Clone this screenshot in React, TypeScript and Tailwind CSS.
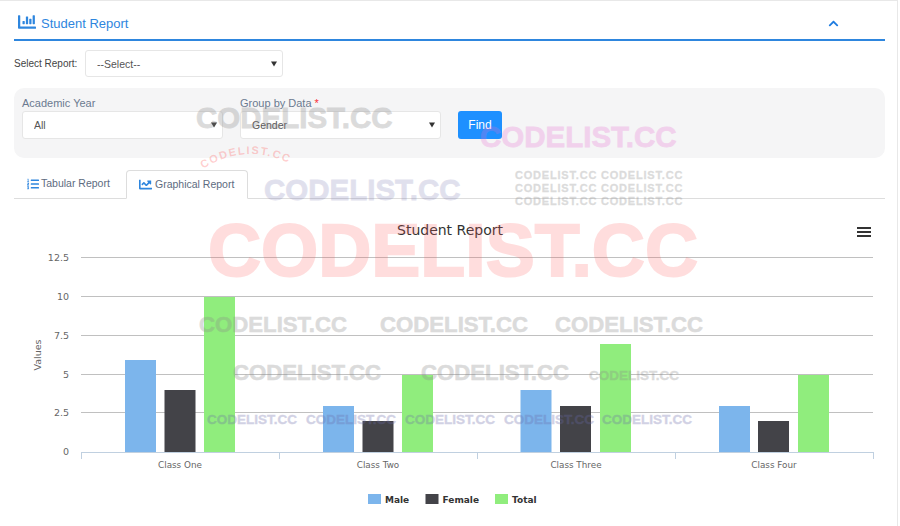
import React from 'react';
import { FaChartBar, FaChartLine, FaChevronUp, FaListOl } from 'react-icons/fa';

const gridLines = [
  { y: 258, label: '12.5' },
  { y: 297, label: '10' },
  { y: 336, label: '7.5' },
  { y: 375, label: '5' },
  { y: 413, label: '2.5' },
];

const bars = [
  { x: 125, top: 360, fill: '#7cb5ec' },
  { x: 164.5, top: 390, fill: '#434348' },
  { x: 204, top: 297, fill: '#90ed7d' },
  { x: 323, top: 406, fill: '#7cb5ec' },
  { x: 362.5, top: 421, fill: '#434348' },
  { x: 402, top: 375, fill: '#90ed7d' },
  { x: 520.5, top: 390, fill: '#7cb5ec' },
  { x: 560, top: 406, fill: '#434348' },
  { x: 600, top: 344, fill: '#90ed7d' },
  { x: 719, top: 406, fill: '#7cb5ec' },
  { x: 758, top: 421, fill: '#434348' },
  { x: 798, top: 375, fill: '#90ed7d' },
];

const classes = [
  { x: 180, label: 'Class One' },
  { x: 378, label: 'Class Two' },
  { x: 576, label: 'Class Three' },
  { x: 774, label: 'Class Four' },
];

const legend = [
  { x: 368, label: 'Male', fill: '#7cb5ec' },
  { x: 425.5, label: 'Female', fill: '#434348' },
  { x: 495, label: 'Total', fill: '#90ed7d' },
];

const Chart: React.FC = () => (
  <svg viewBox="0 199 898 326" className="block w-[898px] h-[326px] -ml-[14px]" fontFamily="'DejaVu Sans', sans-serif">
    <text x="450" y="235" textAnchor="middle" fontSize="14" fill="#333">Student Report</text>
    <path d="M857 228h14M857 232h14M857 236h14" stroke="#333" strokeWidth="2" />
    {gridLines.map((g) => (
      <g key={g.y}>
        <line x1="81" x2="873" y1={g.y - 0.5} y2={g.y - 0.5} stroke="#c0c0c0" />
        <text x="69" y={g.y + 3} textAnchor="end" fontSize="9.500" fill="#666">{g.label}</text>
      </g>
    ))}
    <text x="69" y="455" textAnchor="end" fontSize="9.500" fill="#666">0</text>
    <text x="41" y="355" textAnchor="middle" fontSize="9.500" fill="#666" transform="rotate(-90 41 355)">Values</text>
    {bars.map((b) => (
      <rect key={b.x} x={b.x} y={b.top} width="31" height={452 - b.top} fill={b.fill} />
    ))}
    <path d="M81 452.500H873M81.500 452v7M279.500 452v7M477.500 452v7M675.500 452v7M873.500 452v7" stroke="#c0d0e0" fill="none" />
    {classes.map((c) => (
      <text key={c.x} x={c.x} y="468" textAnchor="middle" fontSize="8.800" fill="#666">{c.label}</text>
    ))}
    {legend.map((l) => (
      <g key={l.x}>
        <rect x={l.x} y="494" width="13" height="10" fill={l.fill} />
        <text x={l.x + 17} y="503" fontSize="9" fontWeight="700" fill="#333">{l.label}</text>
      </g>
    ))}
  </svg>
);

const marks = [
  { text: 'CODELIST.CC', cls: 'left-[196px] top-[103px] text-[29.500px] [-webkit-text-stroke:0.8px] text-[#8a8a8a] opacity-30' },
  { text: 'CODELIST.CC', cls: 'left-[480px] top-[122px] text-[29.500px] [-webkit-text-stroke:0.8px] text-[#e66ad0] opacity-25' },
  { text: 'CODELIST.CC', cls: 'left-[264px] top-[175px] text-[29.500px] [-webkit-text-stroke:0.8px] text-[#6a6aa8] opacity-20' },
  { text: 'CODELIST.CC CODELIST.CC', cls: 'left-[515px] top-[170px] text-[11px] tracking-[0.8px] [-webkit-text-stroke:0.3px] text-[#8a8a8a] opacity-30' },
  { text: 'CODELIST.CC CODELIST.CC', cls: 'left-[515px] top-[183px] text-[11px] tracking-[0.8px] [-webkit-text-stroke:0.3px] text-[#8a8a8a] opacity-30' },
  { text: 'CODELIST.CC CODELIST.CC', cls: 'left-[515px] top-[196px] text-[11px] tracking-[0.8px] [-webkit-text-stroke:0.3px] text-[#8a8a8a] opacity-30' },
  { text: 'CODELIST.CC', cls: 'left-[208px] top-[214px] text-[73.500px] [-webkit-text-stroke:2px] text-[#ff5a5a] opacity-20' },
  { text: 'CODELIST.CC', cls: 'left-[199px] top-[314px] text-[22.200px] [-webkit-text-stroke:0.6px] text-[#8a8a8a] opacity-30' },
  { text: 'CODELIST.CC', cls: 'left-[380px] top-[314px] text-[22.200px] [-webkit-text-stroke:0.6px] text-[#8a8a8a] opacity-30' },
  { text: 'CODELIST.CC', cls: 'left-[555px] top-[314px] text-[22.200px] [-webkit-text-stroke:0.6px] text-[#8a8a8a] opacity-30' },
  { text: 'CODELIST.CC', cls: 'left-[233px] top-[362px] text-[22.200px] [-webkit-text-stroke:0.6px] text-[#8a8a8a] opacity-30' },
  { text: 'CODELIST.CC', cls: 'left-[421px] top-[362px] text-[22.200px] [-webkit-text-stroke:0.6px] text-[#8a8a8a] opacity-30' },
  { text: 'CODELIST.CC', cls: 'left-[589px] top-[369px] text-[13.500px] [-webkit-text-stroke:0.4px] text-[#8a8a8a] opacity-30' },
  { text: 'CODELIST.CC', cls: 'left-[207px] top-[413px] text-[13.500px] [-webkit-text-stroke:0.4px] text-[#6a6aa8] opacity-30' },
  { text: 'CODELIST.CC', cls: 'left-[306px] top-[413px] text-[13.500px] [-webkit-text-stroke:0.4px] text-[#6a6aa8] opacity-30' },
  { text: 'CODELIST.CC', cls: 'left-[405px] top-[413px] text-[13.500px] [-webkit-text-stroke:0.4px] text-[#6a6aa8] opacity-30' },
  { text: 'CODELIST.CC', cls: 'left-[504px] top-[413px] text-[13.500px] [-webkit-text-stroke:0.4px] text-[#6a6aa8] opacity-30' },
  { text: 'CODELIST.CC', cls: 'left-[602px] top-[413px] text-[13.500px] [-webkit-text-stroke:0.4px] text-[#6a6aa8] opacity-30' },
];

const Select: React.FC<{ value: string; className: string }> = ({ value, className }) => (
  <div className={`relative ${className}`}>
    <select
      defaultValue={value}
      className="w-full h-full appearance-none bg-white border border-[#e6e6e6] rounded-[3px] text-[10.500px] text-[#555] pl-[11px] pt-[2px] outline-none"
    >
      <option>{value}</option>
    </select>
    <span className="absolute right-[6px] top-1/2 -translate-y-1/2 border-x-[3px] border-t-[5px] border-x-transparent border-t-[#333]" />
  </div>
);

export default function App() {
  return (
    <div className="relative w-[900px] h-[526px] overflow-hidden bg-white font-['Liberation_Sans',sans-serif]">
      <div className="w-[898px] h-[526px] border-t border-r border-[#e8e8e8] pl-[14px] pr-[12px]">
        <div className="h-[40px] pt-[6px] flex items-center justify-between border-b-2 border-[#2e86de] pl-1 pr-[46px]">
          <div className="flex items-center gap-[5px] text-[#2e86de]">
            <FaChartBar className="w-[18px] h-[18px] -mt-[2px]" />
            <span className="text-[13px] mt-[2px]">Student Report</span>
          </div>
          <FaChevronUp className="w-[11px] h-[11px] text-[#1e7ce0]" />
        </div>

        <div className="flex items-center mt-[9px]">
          <label className="w-[71px] text-[10px] text-[#444]">Select Report:</label>
          <Select value="--Select--" className="w-[198px] h-[27px]" />
        </div>

        <div className="mt-[11px] h-[70px] rounded-[10px] bg-[#f5f5f6] px-2 pt-[9px] flex gap-[17px]">
          <div className="flex flex-col">
            <label className="text-[11px] leading-[13px] mb-px text-[#6b7a90]">Academic Year</label>
            <Select value="All" className="w-[201px] h-[28px]" />
          </div>
          <div className="flex flex-col">
            <label className="text-[11px] leading-[13px] mb-px text-[#6b7a90]">
              Group by Data <span className="text-red-500">*</span>
            </label>
            <Select value="Gender" className="w-[201px] h-[28px]" />
          </div>
          <button className="mt-[14px] h-[28px] w-[44px] rounded-[3px] bg-[#1e90ff] text-white text-[12px]">Find</button>
        </div>

        <div className="mt-[12px] h-[29px] flex items-end border-b border-[#dddddd] text-[10.500px] text-[#5d6b80]">
          <div className="w-[112px] h-[29px] pl-[13px] flex items-center gap-[2px]">
            <FaListOl className="w-[12px] h-[12px] text-[#2e86de]" />
            <span>Tabular Report</span>
          </div>
          <div className="w-[122px] h-[29px] -mb-px pl-[12px] flex items-center gap-[3px] bg-white border border-b-white border-[#dddddd] rounded-t-[4px]">
            <FaChartLine className="w-[13px] h-[13px] text-[#2e86de]" />
            <span>Graphical Report</span>
          </div>
        </div>

        <Chart />
      </div>

      {marks.map((m) => (
        <span key={m.cls} className={`absolute font-bold leading-none whitespace-nowrap pointer-events-none ${m.cls}`}>{m.text}</span>
      ))}
      <svg viewBox="0 0 110 40" className="absolute left-[196px] top-[142px] w-[110px] h-[40px] pointer-events-none">
        <path id="curve" d="M7 27 Q54 -3 104 27" fill="none" />
        <text fontSize="11" fontWeight="700" letterSpacing="1.600" fill="#ff5a5a" fillOpacity="0.3" fontFamily="'Liberation Sans', sans-serif">
          <textPath href="#curve">CODELIST.CC</textPath>
        </text>
      </svg>
    </div>
  );
}
